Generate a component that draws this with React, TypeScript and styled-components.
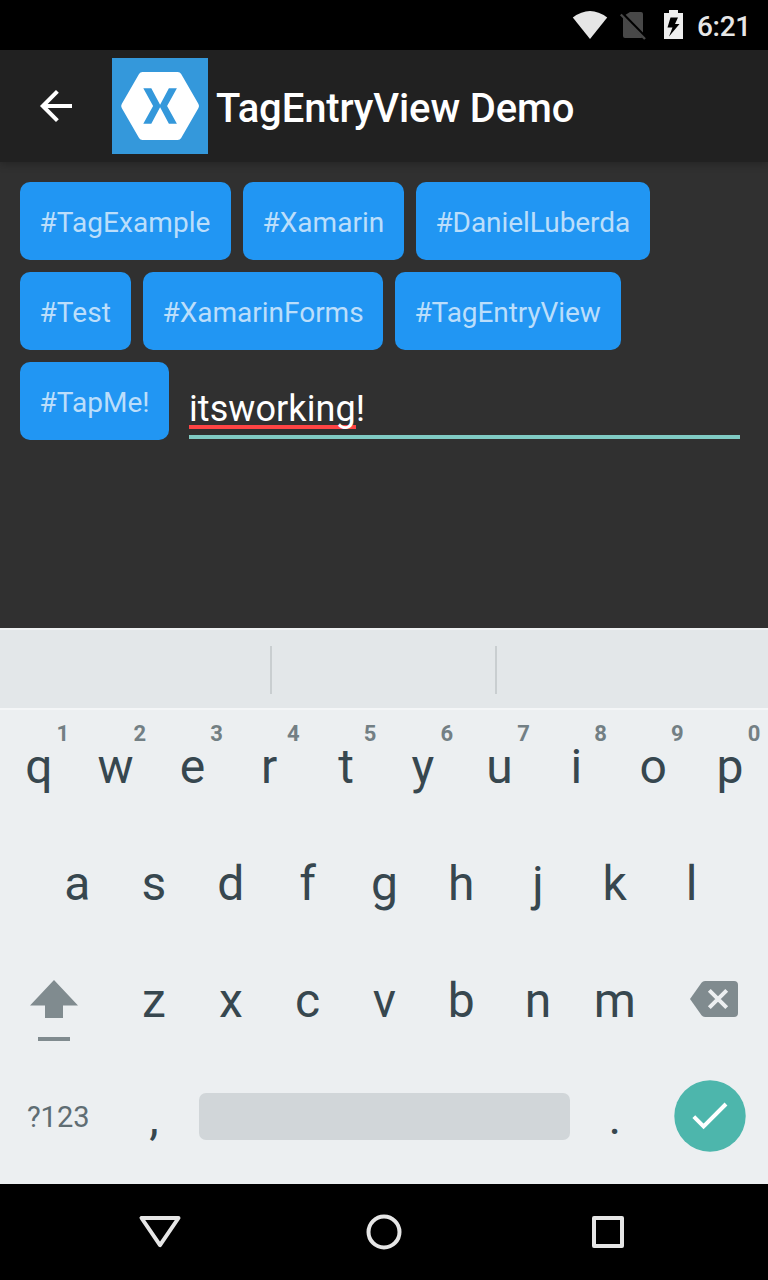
import React from 'react';
import styled, { createGlobalStyle } from 'styled-components';

const GlobalStyle = createGlobalStyle`
  * { box-sizing: border-box; }
  body { margin: 0; background: #303030; font-family: Roboto, sans-serif; }
  svg { display: block; flex: none; }
`;

const Screen = styled.div`
  width: 768px;
  height: 1280px;
  display: flex;
  flex-direction: column;
  overflow: hidden;
  background: #303030;
`;

const StatusBar = styled.div`
  height: 50px;
  flex: none;
  display: flex;
  justify-content: flex-end;
  align-items: center;
  padding-right: 17px;
  background: #000;
`;

const Clock = styled.span`
  width: 54px;
  margin-left: 13px;
  padding-top: 3px;
  font-size: 28px;
  line-height: 32px;
  font-weight: 500;
  letter-spacing: -0.3px;
  color: #e6e6e6;
`;

const Header = styled.header`
  height: 112px;
  flex: none;
  display: flex;
  align-items: center;
  padding-left: 36px;
  background: #212121;
  box-shadow: 0 2px 8px rgba(0, 0, 0, 0.25);
`;

const Logo = styled.div`
  margin-left: 36px;
  background: #3498db;
`;

const Title = styled.h1`
  margin: 6px 0 0 8px;
  font-size: 40px;
  line-height: 48px;
  font-weight: 500;
  letter-spacing: -0.12px;
  color: #fff;
`;

const TagArea = styled.main`
  flex: 1;
  display: flex;
  flex-wrap: wrap;
  align-content: flex-start;
  gap: 12px;
  padding: 20px;
`;

const Tag = styled.span<{ $width: number; $spacing?: number }>`
  width: ${(p) => p.$width}px;
  height: 78px;
  padding: 3px 0 0 19.4px;
  display: flex;
  align-items: center;
  border-radius: 10px;
  background: #2196f3;
  color: #bbdefb;
  font-size: 28px;
  letter-spacing: ${(p) => p.$spacing ?? 0}px;
  white-space: nowrap;
`;

const Entry = styled.div`
  flex: 1;
  height: 77px;
  margin: 0 8px;
  padding-top: 26px;
  border-bottom: 4px solid #80cbc4;
  color: #fff;
  font-size: 36px;
  line-height: 42px;
  letter-spacing: 0.08px;
`;

const Misspelled = styled.span`
  position: relative;
  isolation: isolate;
  display: inline-block;
  &::after {
    content: '';
    position: absolute;
    z-index: -1;
    left: 0;
    right: 0;
    top: 37px;
    height: 4px;
    background: #ff4444;
  }
`;

const Keyboard = styled.section`
  height: 556px;
  flex: none;
  background: #eceff1;
`;

const Suggestions = styled.div`
  height: 82px;
  display: flex;
  padding-top: 16px;
  border-top: 2px solid #eef1f2;
  border-bottom: 2px solid #f4f6f7;
  background: #e3e7e9;
`;

const Suggestion = styled.div<{ $width: number }>`
  width: ${(p) => p.$width}px;
  height: 48px;
  border-right: 2px solid #c9ced0;
`;

const KeyRow = styled.div<{ $inset?: boolean }>`
  height: 117px;
  display: flex;
  padding: 0 ${(p) => (p.$inset ? '38.4px' : '0')};
`;

const Key = styled.div<{ $width?: number }>`
  position: relative;
  width: ${(p) => p.$width ?? 76.8}px;
  height: 117px;
  padding: 0 0 4px 0.8px;
  display: flex;
  align-items: center;
  justify-content: center;
  color: #37474f;
  font-size: 48px;
`;

const Hint = styled.span`
  position: absolute;
  left: 50%;
  top: 11px;
  width: 49px;
  text-align: center;
  font-size: 22px;
  line-height: 26px;
  font-weight: 700;
  color: #737f84;
`;

const SymbolKey = styled(Key)`
  padding: 0 0 5px 1.2px;
  font-size: 29px;
  color: #5f6d73;
`;

const SpaceCell = styled.div`
  width: 384px;
  padding: 32px 5px 0 7px;
`;

const SpaceBar = styled.div`
  width: 371px;
  height: 47px;
  border-radius: 7px;
  background: #d1d6d9;
`;

const IconKey = styled.div<{ $width: number; $top: number; $left: number }>`
  width: ${(p) => p.$width}px;
  padding: ${(p) => p.$top}px 0 0 ${(p) => p.$left}px;
`;

const NavBar = styled.nav`
  height: 96px;
  flex: none;
  display: flex;
  align-items: center;
  justify-content: center;
  gap: 176px;
  background: #000;
`;

const TAGS = [
  { name: 'TagExample', width: 211, spacing: 0.07 },
  { name: 'Xamarin', width: 161, spacing: 0.05 },
  { name: 'DanielLuberda', width: 234, spacing: -0.05 },
  { name: 'Test', width: 111, spacing: 0.1 },
  { name: 'XamarinForms', width: 240 },
  { name: 'TagEntryView', width: 226, spacing: -0.08 },
  { name: 'TapMe!', width: 149, spacing: 0.05 },
];
const HINTS = '1234567890';

const StatusIcons = () => (
  <svg width="112" height="50" viewBox="572 0 112 50">
    <path d="M572.8 17.5Q590 4.500 607.2 17.5L590 39Z" fill="#e6e6e6" />
    <path d="M630 12h11q2 0 2 2v18.5L625.600 14.8ZM623 17v19q0 2 2 2h16q1 0 1.500-.7Z" fill="#484848" />
    <path d="M620.800 14.500 645 39" stroke="#484848" strokeWidth="2.400" />
    <path fillRule="evenodd" d="M669 10h9v3h5v26h-19V13h5ZM670.500 17.500 667.500 27.500h5L669 36.500 679.500 24h-4.500L678 17.500Z" fill="#eee" />
  </svg>
);

const BackArrow = () => (
  <svg width="40" height="40" viewBox="0 0 40 40">
    <path d="M36 20H7M21.400 5.400 6.800 20 21.400 34.600" fill="none" stroke="#fff" strokeWidth="4" />
  </svg>
);

const HexLogo = () => (
  <svg width="96" height="96" viewBox="0 0 96 96">
    <path d="M13.200 48 30.500 18h35.200L83 48 65.700 78H30.500Z" fill="#fff" stroke="#fff" strokeWidth="8" strokeLinejoin="round" />
    <path d="M31.300 30.200h8L48.100 46.700 56.900 30.200h8L55.100 48l9.800 17.700h-8L48.100 49.300 39.300 65.700h-8L41.100 48Z" fill="#3498db" />
  </svg>
);

export default function App() {
  return (
    <Screen>
      <GlobalStyle />
      <StatusBar>
        <StatusIcons />
        <Clock>6:21</Clock>
      </StatusBar>
      <Header>
        <BackArrow />
        <Logo><HexLogo /></Logo>
        <Title>TagEntryView Demo</Title>
      </Header>
      <TagArea>
        {TAGS.map((t) => <Tag key={t.name} $width={t.width} $spacing={t.spacing}>#{t.name}</Tag>)}
        <Entry><Misspelled>itsworking</Misspelled>!</Entry>
      </TagArea>
      <Keyboard>
        <Suggestions>
          <Suggestion $width={272} />
          <Suggestion $width={225} />
        </Suggestions>
        <KeyRow>
          {[...'qwertyuiop'].map((k, i) => <Key key={k}>{k}<Hint>{HINTS[i]}</Hint></Key>)}
        </KeyRow>
        <KeyRow $inset>
          {[...'asdfghjkl'].map((k) => <Key key={k}>{k}</Key>)}
        </KeyRow>
        <KeyRow>
          <IconKey $width={115.2} $top={36} $left={30}>
            <svg width="48" height="62" viewBox="0 0 48 62" fill="#808b8f">
              <path d="M24 0 48 25.500H33V38H15V25.500H0ZM8 57h32v4H8Z" />
            </svg>
          </IconKey>
          {[...'zxcvbnm'].map((k) => <Key key={k}>{k}</Key>)}
          <IconKey $width={115.2} $top={37} $left={37}>
            <svg width="48" height="36" viewBox="0 0 48 36">
              <path d="M0 18 11.500 1.800Q12.800 0 15 0H44q4 0 4 4v28q0 4-4 4H15q-2.200 0-3.500-1.800Z" fill="#808b8f" />
              <path d="m19.300 9.300 17.400 17.400m0-17.400L19.300 26.700" stroke="#eceff1" strokeWidth="4" />
            </svg>
          </IconKey>
        </KeyRow>
        <KeyRow>
          <SymbolKey $width={115.2}>?123</SymbolKey>
          <Key>,</Key>
          <SpaceCell><SpaceBar /></SpaceCell>
          <Key>.</Key>
          <IconKey $width={115.2} $top={19} $left={21.2}>
            <svg width="72" height="72" viewBox="0 0 72 72">
              <circle cx="36" cy="36" r="35.700" fill="#4db6ac" />
              <path d="m19.800 36.600 9.800 9.800L52 24" fill="none" stroke="#fff" strokeWidth="4" />
            </svg>
          </IconKey>
        </KeyRow>
      </Keyboard>
      <NavBar>
        <svg width="48" height="48" viewBox="0 0 48 48" fill="none" stroke="#e6e6e6" strokeWidth="4" strokeLinejoin="round">
          <path d="M5.500 10h37L24 37.200Z" />
        </svg>
        <svg width="48" height="48" viewBox="0 0 48 48" fill="none" stroke="#e6e6e6" strokeWidth="4">
          <circle cx="24" cy="24" r="15.500" />
        </svg>
        <svg width="48" height="48" viewBox="0 0 48 48" fill="none" stroke="#e6e6e6" strokeWidth="4" strokeLinejoin="round">
          <path d="M10 10h28v28H10Z" />
        </svg>
      </NavBar>
    </Screen>
  );
}
